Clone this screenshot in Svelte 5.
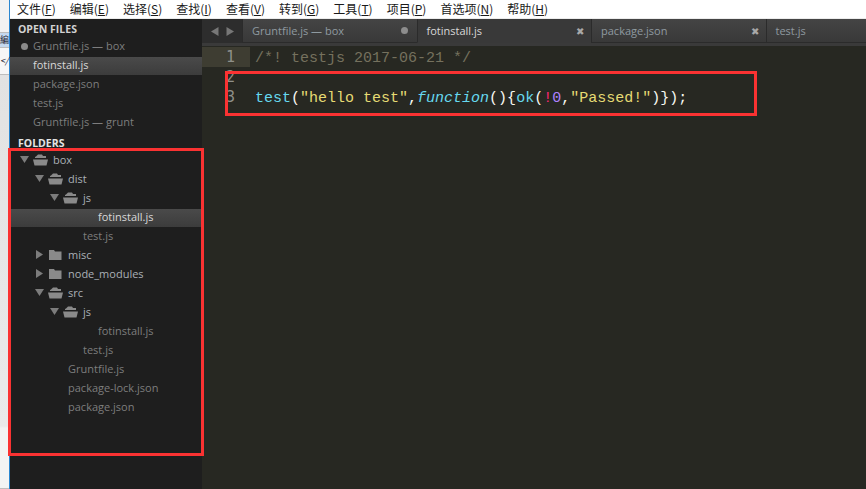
<script lang="ts">
  const menus = [
    ['文件', 'F'], ['编辑', 'E'], ['选择', 'S'], ['查找', 'I'], ['查看', 'V'],
    ['转到', 'G'], ['工具', 'T'], ['项目', 'P'], ['首选项', 'N'], ['帮助', 'H'],
  ];

  const openFiles = [
    { name: 'Gruntfile.js — box', dirty: true },
    { name: 'fotinstall.js', selected: true },
    { name: 'package.json' },
    { name: 'test.js' },
    { name: 'Gruntfile.js — grunt' },
  ];

  // kind: open / closed folder, or a plain file
  const tree = [
    { name: 'box', depth: 0, kind: 'open' },
    { name: 'dist', depth: 1, kind: 'open' },
    { name: 'js', depth: 2, kind: 'open' },
    { name: 'fotinstall.js', depth: 3, kind: 'file', selected: true },
    { name: 'test.js', depth: 2, kind: 'file' },
    { name: 'misc', depth: 1, kind: 'closed' },
    { name: 'node_modules', depth: 1, kind: 'closed' },
    { name: 'src', depth: 1, kind: 'open' },
    { name: 'js', depth: 2, kind: 'open' },
    { name: 'fotinstall.js', depth: 3, kind: 'file' },
    { name: 'test.js', depth: 2, kind: 'file' },
    { name: 'Gruntfile.js', depth: 1, kind: 'file' },
    { name: 'package-lock.json', depth: 1, kind: 'file' },
    { name: 'package.json', depth: 1, kind: 'file' },
  ];

  const tabs = [
    { name: 'Gruntfile.js — box', dirty: true },
    { name: 'fotinstall.js', active: true, close: true },
    { name: 'package.json', close: true },
    { name: 'test.js' },
  ];
</script>

<div class="screen">
  <div class="desk">
    <div class="desk-row r1"></div>
    <div class="desk-row r2"><span>編</span></div>
    <div class="desk-row r3"><span>&lt;/</span></div>
    <div class="desk-row r4"></div>
  </div>

  <div class="window">
    <nav class="menu">
      {#each menus as [label, key]}
        <span class="menu-item">{label}(<u>{key}</u>)</span>
      {/each}
    </nav>

    <div class="main">
      <aside class="sidebar">
        <h2 class="head">OPEN FILES</h2>
        {#each openFiles as f}
          <div class="open-row" class:selected={f.selected}>
            {#if f.dirty}<i class="dot"></i>{/if}
            <span>{f.name}</span>
          </div>
        {/each}

        <h2 class="head folders">FOLDERS</h2>
        {#each tree as n}
          <div
            class="tree-row"
            class:selected={n.selected}
            class:folder={n.kind !== 'file'}
            style:padding-left="{10 + n.depth * 15}px"
          >
            {#if n.kind === 'file'}
              <span class="spacer"></span>
            {:else}
              <svg class="arrow" width="9" height="9" viewBox="0 0 9 9">
                {#if n.kind === 'open'}
                  <path d="M0 1h9L4.500 8z" />
                {:else}
                  <path d="M1 0l7 4.500L1 9z" />
                {/if}
              </svg>
              <svg class="folder-icon" width="15" height="12" viewBox="0 0 15 12">
                {#if n.kind === 'open'}
                  <path d="M3 2.500L5 .5h4l1 1.500h3v2H2v-1z" />
                  <path d="M0 5.500h15L13.500 11.500H1.500z" />
                {:else}
                  <path d="M1 1h5l1 1.500h6.500V11H1z" />
                {/if}
              </svg>
            {/if}
            <span class="label">{n.name}</span>
          </div>
        {/each}
      </aside>

      <section class="editor">
        <div class="tabbar">
          <div class="tab-nav">
            <svg width="8" height="9" viewBox="0 0 8 9"><path d="M7.500 0v9L0 4.500z" /></svg>
            <svg width="8" height="9" viewBox="0 0 8 9"><path d="M.5 0v9L8 4.500z" /></svg>
          </div>
          {#each tabs as t}
            <div class="tab" class:active={t.active}>
              <span class="tab-name">{t.name}</span>
              {#if t.dirty}<i class="tab-dot"></i>{/if}
              {#if t.close}<span class="tab-close">✖</span>{/if}
            </div>
          {/each}
        </div>

        <div class="code">
          <div class="gutter">
            <div class="ln current">1</div>
            <div class="ln">2</div>
            <div class="ln">3</div>
          </div>
          <div class="lines">
            <div class="line comment">/*! testjs 2017-06-21 */</div>
            <div class="line"></div>
            <div class="line"><span class="fn">test</span>(<span class="str">"hello test"</span>,<em class="fn">function</em>()&#123;<span class="fn">ok</span>(<span class="op">!</span><span class="num">0</span>,<span class="str">"Passed!"</span>)&#125;);</div>
          </div>
        </div>
      </section>
    </div>
  </div>

  <div class="mark mark-tree"></div>
  <div class="mark mark-code"></div>
</div>

<style>
  :global(body) {
    margin: 0;
    overflow: hidden;
  }

  .screen {
    position: relative;
    display: flex;
    width: 866px;
    height: 489px;
    overflow: hidden;
    background: #fff;
  }

  .desk {
    flex: 0 0 9px;
    display: flex;
    flex-direction: column;
    background: #e8e8e8;
    border-right: 1px solid #2a86d0;
    font: 9px "Noto Sans CJK SC", sans-serif;
    color: #223;
  }
  .desk-row {
    border-bottom: 1px solid #bdbdbd;
    white-space: nowrap;
  }
  .r1 { height: 32px; background: #f2f2f2; }
  .r2 { height: 14px; line-height: 14px; background: #c5d8ee; }
  .r3 { height: 26px; line-height: 26px; background: #f6f6f6; font-style: italic; }
  .r4 { flex: 1; background: linear-gradient(#e2e2e2, #eaeaea 85%, #f3f3f3 85.500%); }

  .window {
    flex: 1;
    min-width: 0;
    display: flex;
    flex-direction: column;
  }

  .menu {
    flex: 0 0 18px;
    display: flex;
    gap: 14px;
    padding-left: 7px;
    align-items: center;
    background: #fff;
    border-bottom: 1px solid #ececec;
    font: 12px/18px "Noto Sans CJK SC", sans-serif;
    color: #1a1a1a;
    white-space: nowrap;
  }
  .menu-item u {
    text-underline-offset: 1px;
  }

  .main {
    flex: 1;
    min-height: 0;
    display: flex;
  }

  .sidebar {
    flex: 0 0 192px;
    background: #1e1e1e;
    font: 11px/19px "Open Sans", sans-serif;
    overflow: hidden;
  }

  .head {
    margin: 0;
    padding: 1px 0 0 8px;
    height: 18px;
    line-height: 19px;
    font-size: 10.500px;
    font-weight: 700;
    color: #d2d2d2;
    box-sizing: border-box;
  }
  .head.folders {
    height: 19px;
    padding-top: 2px;
    color: #e4e4e4;
  }

  .open-row {
    position: relative;
    height: 19px;
    line-height: 17px;
    padding-left: 23px;
    color: #7d7d7d;
    white-space: nowrap;
  }
  /* the highlight sits a pixel below the row's text box */
  .open-row.selected,
  .tree-row.selected {
    color: #d8d8d8;
    background: linear-gradient(#4a4a4a, #3c3c3c) 0 1px / 100% 18px no-repeat;
  }
  .dot {
    position: absolute;
    left: 11px;
    top: 6px;
    width: 7px;
    height: 7px;
    border-radius: 50%;
    background: #8a8a8a;
  }

  .tree-row {
    display: flex;
    align-items: center;
    box-sizing: border-box;
    height: 19px;
    padding-bottom: 2px;
    color: #7d7d7d;
    white-space: nowrap;
  }
  .tree-row.folder {
    color: #aab0b6;
  }
  .spacer {
    width: 33px;
    flex: none;
  }
  .arrow {
    flex: none;
    margin: 0 4px 0 0;
    fill: #7c7c7c;
  }
  .folder-icon {
    flex: none;
    margin-right: 5px;
    fill: #8a8a8a;
  }

  .editor {
    flex: 1;
    min-width: 0;
    display: flex;
    flex-direction: column;
    background: #272822;
  }

  .tabbar {
    flex: 0 0 27px;
    display: flex;
    box-sizing: border-box;
    background: #2d2d2d;
    border-bottom: 3px solid #3a3a3a;
  }
  .tab-nav {
    flex: 0 0 40px;
    display: flex;
    align-items: center;
    justify-content: center;
    gap: 7px;
    fill: #777;
  }
  .tab {
    flex: 0 0 174.500px;
    box-sizing: border-box;
    display: flex;
    align-items: center;
    padding: 0 9px 0 9px;
    background: linear-gradient(#444, #393939);
    border-left: 1px solid #2b2b2b;
    border-bottom: 1px solid #2b2b2b;
    font: 11px "Open Sans", sans-serif;
    color: #8f9aa0;
    white-space: nowrap;
  }
  .tab.active {
    background: #393939;
    border-bottom-color: #393939;
    color: #d8d8d8;
  }
  .tab-name {
    flex: 1;
  }
  .tab-dot {
    width: 7px;
    height: 7px;
    border-radius: 50%;
    background: #8d8d8d;
  }
  .tab-close {
    font-size: 10px;
    color: #a8a8a8;
    margin-right: -2px;
  }

  .code {
    flex: 1;
    display: flex;
    font: 15px/20px "Liberation Mono", monospace;
    color: #f8f8f2;
    padding-top: 1px;
  }
  .gutter {
    flex: 0 0 48px;
    color: #8f908a;
    font-family: "DejaVu Sans Mono", monospace;
  }
  .ln {
    height: 20px;
    padding-left: 24px;
  }
  .ln.current {
    background: #3e3d32;
  }
  .lines {
    padding: 2px 0 0 5px;
  }
  .line {
    height: 20px;
    white-space: pre;
  }
  .comment { color: #75715e; }
  .fn { color: #66d9ef; }
  .str { color: #e6db74; }
  .op { color: #f92672; }
  .num { color: #ae81ff; }

  /* annotation boxes drawn over the screenshot */
  .mark {
    position: absolute;
    box-sizing: border-box;
    border: 3px solid #fa3232;
    pointer-events: none;
  }
  .mark-tree {
    left: 8px;
    top: 148px;
    width: 196px;
    height: 308px;
  }
  .mark-code {
    left: 225px;
    top: 71px;
    width: 532px;
    height: 45px;
  }
</style>
